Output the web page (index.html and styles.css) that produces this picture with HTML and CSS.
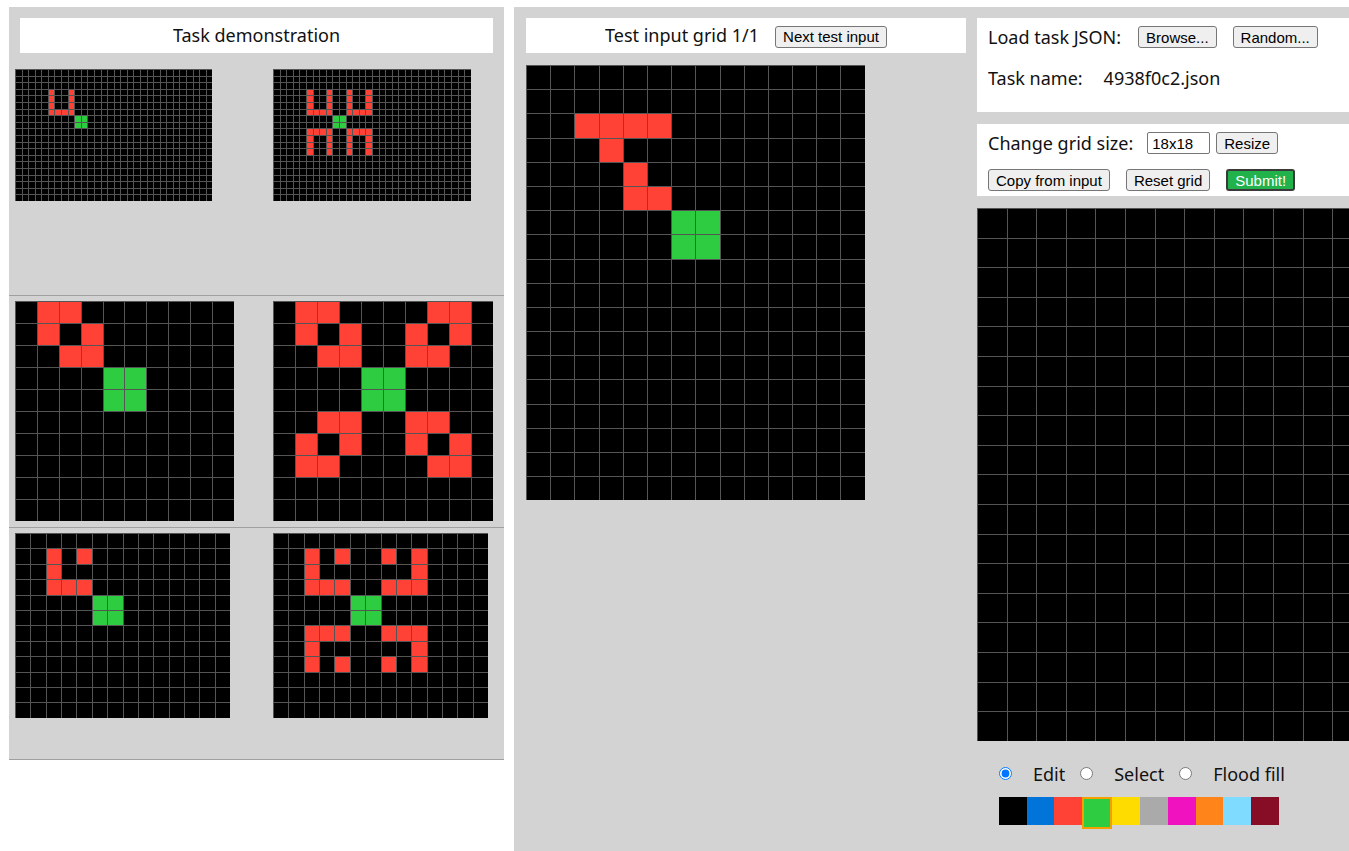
FILE: index.html
```html
<!DOCTYPE html>
<html lang="en">
<head>
<meta charset="utf-8">
<title>ARC testing interface</title>
<link rel="stylesheet" href="styles.css">
</head>
<body>
<div class="app">
  <section class="demo">
    <div class="panel-header">Task demonstration</div>
    <div class="pair">
      <div class="pair-cell"><div class="grid" id="p1i"></div></div>
      <div class="pair-cell"><div class="grid" id="p1o"></div></div>
    </div>
    <div class="pair">
      <div class="pair-cell"><div class="grid" id="p2i"></div></div>
      <div class="pair-cell"><div class="grid" id="p2o"></div></div>
    </div>
    <div class="pair">
      <div class="pair-cell"><div class="grid" id="p3i"></div></div>
      <div class="pair-cell"><div class="grid" id="p3o"></div></div>
    </div>
  </section>
  <section class="work">
    <div class="test">
      <div class="panel-header test-header">
        <span>Test input grid 1/1</span>
        <button class="btn">Next test input</button>
      </div>
      <div class="grid test-grid" id="testIn"></div>
    </div>
    <div class="editor">
      <div class="box box-load">
        <div class="row">
          <span class="label">Load task JSON:</span>
          <button class="btn btn-browse">Browse...</button>
          <button class="btn btn-random">Random...</button>
        </div>
        <div class="row row-name">
          <span class="label">Task name:</span>
          <span class="task-name">4938f0c2.json</span>
        </div>
      </div>
      <div class="box box-size">
        <div class="row">
          <span class="label">Change grid size:</span>
          <input class="size-input" type="text" value="18x18">
          <button class="btn btn-resize">Resize</button>
        </div>
        <div class="row row-actions">
          <button class="btn">Copy from input</button>
          <button class="btn btn-gap">Reset grid</button>
          <button class="btn btn-gap btn-submit">Submit!</button>
        </div>
      </div>
      <div class="grid out-grid" id="outGrid"></div>
      <div class="modes">
        <input type="radio" name="mode" id="m-edit" checked><label for="m-edit">Edit</label>
        <input type="radio" name="mode" id="m-select"><label for="m-select">Select</label>
        <input type="radio" name="mode" id="m-fill"><label for="m-fill">Flood fill</label>
      </div>
      <div class="palette">
        <div class="swatch c0"></div>
        <div class="swatch c1"></div>
        <div class="swatch c2"></div>
        <div class="swatch c3 selected"></div>
        <div class="swatch c4"></div>
        <div class="swatch c5"></div>
        <div class="swatch c6"></div>
        <div class="swatch c7"></div>
        <div class="swatch c8"></div>
        <div class="swatch c9"></div>
      </div>
    </div>
  </section>
</div>
<script src="script.js"></script>
</body>
</html>
```

FILE: styles.css
```css
html {
  overflow: hidden;
}

body {
  margin: 0;
  background: #ffffff;
  font-family: "Noto Sans", "Open Sans", sans-serif;
  font-size: 18px;
  color: #111111;
}

.app {
  display: flex;
  align-items: flex-start;
  gap: 10px;
  padding: 7px 0 0 9px;
}

/* ---------- left: demonstration ---------- */
.demo {
  flex: 0 0 495px;
  width: 495px;
  background: #d3d3d3;
}

.panel-header {
  background: #ffffff;
  height: 35px;
  line-height: 35px;
  text-align: center;
  font-size: 18px;
}

.demo .panel-header {
  margin: 11px;
}

.pair {
  display: grid;
  grid-template-columns: 258px auto;
  align-items: start;
  height: 226px;
  padding: 5px 0 0 6px;
  border-bottom: 1px solid #a0a0a0;
}

/* ---------- grids ---------- */
.grid {
  display: grid;
  width: max-content;
}

.cell {
  box-sizing: border-box;
  border-top: 1px solid #555555;
  border-left: 1px solid #555555;
}

.c0 { background: #000000; }
.c1 { background: #0074d9; }
.c2 { background: #ff4136; }
.c3 { background: #2ecc40; }
.c4 { background: #ffdc00; }
.c5 { background: #aaaaaa; }
.c6 { background: #f012be; }
.c7 { background: #ff851b; }
.c8 { background: #7fdbff; }
.c9 { background: #870c25; }

/* ---------- right: work area ---------- */
.work {
  flex: 1 1 auto;
  display: flex;
  align-items: flex-start;
  background: #d3d3d3;
  padding-bottom: 40px;
  min-width: 0;
}

.test {
  flex: 0 0 440px;
  padding: 11px 0 0 12px;
}

.test-header {
  display: flex;
  justify-content: center;
  align-items: center;
  gap: 16px;
}

.test-header .btn {
  margin-top: 2px;
}

.test-grid {
  margin-top: 12px;
}

.editor {
  flex: 0 0 533px;
  width: 533px;
  margin-left: 11px;
  padding-top: 11px;
}

.box {
  background: #ffffff;
  box-sizing: border-box;
  padding-left: 11px;
}

.box-load {
  height: 94px;
  padding-top: 8px;
}

.box-size {
  height: 72px;
  margin-top: 12px;
  padding-top: 8px;
}

.row {
  display: flex;
  align-items: center;
  height: 22px;
}

.row-name {
  margin-top: 19px;
}

.row-actions {
  margin-top: 15px;
}

.label {
  white-space: nowrap;
}

.task-name {
  margin-left: 21px;
}

.btn {
  box-sizing: border-box;
  height: 22px;
  padding: 0 7px;
  font-family: "Liberation Sans", Arial, sans-serif;
  font-size: 15px;
  color: #000000;
  background: #efefef;
  border: 1px solid #767676;
  border-radius: 3px;
  white-space: nowrap;
}

.btn-browse {
  margin-left: 17px;
}

.btn-random {
  margin-left: 16px;
}

.btn-resize {
  margin-left: 6px;
}

.btn-gap {
  margin-left: 16px;
}

.btn-submit {
  background: #22b24c;
  color: #ffffff;
  border: 2px solid #3a3a3a;
}

.size-input {
  box-sizing: border-box;
  width: 63px;
  height: 22px;
  margin: 0 0 0 14px;
  padding: 0 4px;
  font-family: "Liberation Sans", Arial, sans-serif;
  font-size: 15px;
  color: #000000;
  border: 1px solid #767676;
  border-radius: 2px;
}

.out-grid {
  margin-top: 12px;
}

.modes {
  display: flex;
  align-items: center;
  height: 24px;
  margin: 21px 0 0 22px;
}

.modes input {
  width: 13px;
  height: 13px;
  margin: 0 0 0 15px;
}

.modes input:first-child {
  margin-left: 0;
}

.modes label {
  margin-left: 21px;
}

.palette {
  display: flex;
  align-items: flex-start;
  margin: 11px 0 0 22px;
}

.swatch {
  width: 27.7px;
  height: 28px;
}

.swatch.selected {
  width: 26.4px;
  border: 2px solid #f5a000;
}
```

FILE: script.js
```js
(function () {
  function build(id, rows, cols, cw, ch, data) {
    var el = document.getElementById(id);
    el.style.gridTemplateColumns = 'repeat(' + cols + ', ' + cw + 'px)';
    el.style.gridAutoRows = ch + 'px';
    var map = {};
    Object.keys(data).forEach(function (color) {
      data[color].forEach(function (pair) {
        var r = pair[0];
        pair[1].forEach(function (c) { map[r * cols + c] = color; });
      });
    });
    var frag = document.createDocumentFragment();
    for (var i = 0; i < rows * cols; i++) {
      var d = document.createElement('div');
      d.className = 'cell c' + (map[i] || 0);
      frag.appendChild(d);
    }
    el.appendChild(frag);
  }

  build('p1i', 20, 30, 6.58, 6.6, {
    2: [[3, [5, 8]], [4, [5, 8]], [5, [5, 8]], [6, [5, 6, 7, 8]]],
    3: [[7, [9, 10]], [8, [9, 10]]]
  });
  build('p1o', 20, 30, 6.6, 6.6, {
    2: [[3, [5, 8, 11, 14]], [4, [5, 8, 11, 14]], [5, [5, 8, 11, 14]],
        [6, [5, 6, 7, 8, 11, 12, 13, 14]],
        [9, [5, 6, 7, 8, 11, 12, 13, 14]],
        [10, [5, 8, 11, 14]], [11, [5, 8, 11, 14]], [12, [5, 8, 11, 14]]],
    3: [[7, [9, 10]], [8, [9, 10]]]
  });
  build('p2i', 10, 10, 21.9, 22, {
    2: [[0, [1, 2]], [1, [1, 3]], [2, [2, 3]]],
    3: [[3, [4, 5]], [4, [4, 5]]]
  });
  build('p2o', 10, 10, 22, 22, {
    2: [[0, [1, 2, 7, 8]], [1, [1, 3, 6, 8]], [2, [2, 3, 6, 7]],
        [5, [2, 3, 6, 7]], [6, [1, 3, 6, 8]], [7, [1, 2, 7, 8]]],
    3: [[3, [4, 5]], [4, [4, 5]]]
  });
  build('p3i', 12, 14, 15.36, 15.4, {
    2: [[1, [2, 4]], [2, [2]], [3, [2, 3, 4]]],
    3: [[4, [5, 6]], [5, [5, 6]]]
  });
  build('p3o', 12, 14, 15.36, 15.4, {
    2: [[1, [2, 4, 7, 9]], [2, [2, 9]], [3, [2, 3, 4, 7, 8, 9]],
        [6, [2, 3, 4, 7, 8, 9]], [7, [2, 9]], [8, [2, 4, 7, 9]]],
    3: [[4, [5, 6]], [5, [5, 6]]]
  });
  build('testIn', 18, 14, 24.2, 24.2, {
    2: [[2, [2, 3, 4, 5]], [3, [3]], [4, [4]], [5, [4, 5]]],
    3: [[6, [6, 7]], [7, [6, 7]]]
  });
  build('outGrid', 18, 18, 29.6, 29.6, {});
})();
```
